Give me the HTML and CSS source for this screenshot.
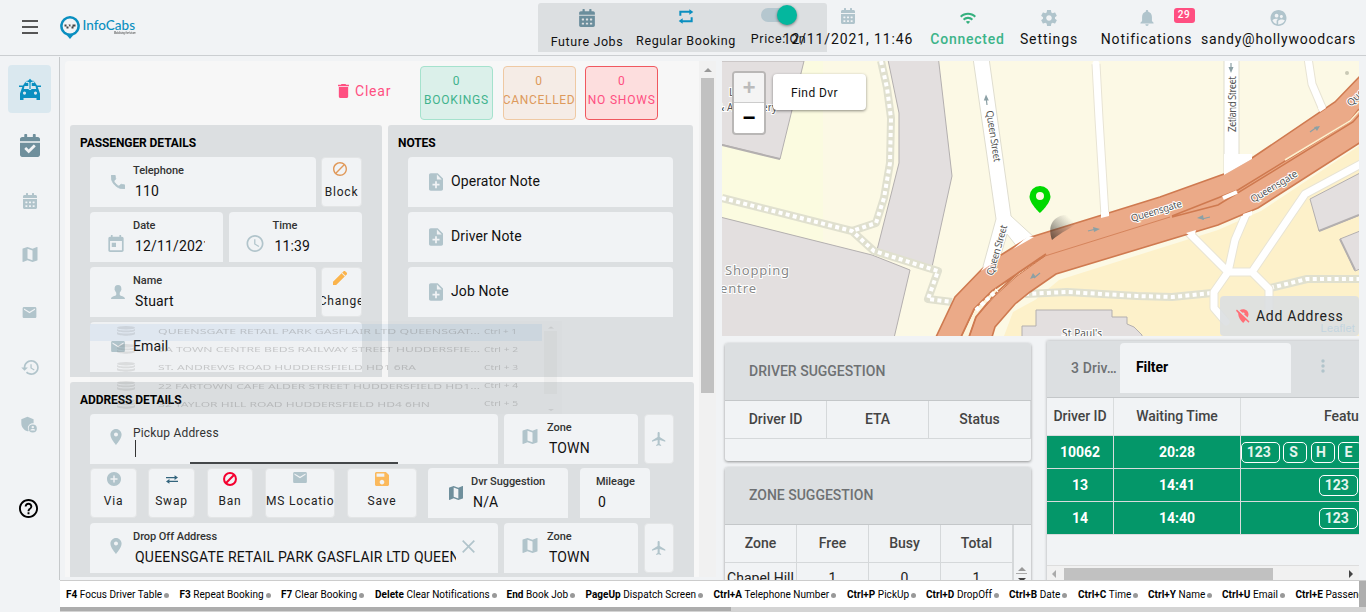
FILE: index.html
```html
<!DOCTYPE html>
<html lang="en">
<head>
<meta charset="utf-8">
<title>InfoCabs</title>
<link rel="stylesheet" href="styles.css">
</head>
<body>
<svg class="defs" width="0" height="0">
  <symbol id="cal" viewBox="0 0 448 512"><path fill-rule="evenodd" d="M0 464c0 26 22 48 48 48h352c26 0 48-22 48-48V192H0v272zM320 268h40q12 0 12 12v32q0 12-12 12h-40q-12 0-12-12v-32q0-12 12-12zM320 388h40q12 0 12 12v32q0 12-12 12h-40q-12 0-12-12v-32q0-12 12-12zM204 268h40q12 0 12 12v32q0 12-12 12h-40q-12 0-12-12v-32q0-12 12-12zM204 388h40q12 0 12 12v32q0 12-12 12h-40q-12 0-12-12v-32q0-12 12-12zM88 268h40q12 0 12 12v32q0 12-12 12H88q-12 0-12-12v-32q0-12 12-12zM88 388h40q12 0 12 12v32q0 12-12 12H88q-12 0-12-12v-32q0-12 12-12zM400 64h-48V16c0-9-7-16-16-16h-32c-9 0-16 7-16 16v48H160V16c0-9-7-16-16-16h-32c-9 0-16 7-16 16v48H48C22 64 0 86 0 112v48h448v-48c0-26-22-48-48-48z"/></symbol>
  <symbol id="calcheck" viewBox="0 0 448 512"><path fill-rule="evenodd" d="M0 464c0 26 22 48 48 48h352c26 0 48-22 48-48V192H0v272zM346 284L203 426q-8 8-17 0L103 342q-8-8 0-17l28-28q9-8 17 0l46 47 107-106q8-8 17 0l28 28q8 9 0 18zM400 64h-48V16c0-9-7-16-16-16h-32c-9 0-16 7-16 16v48H160V16c0-9-7-16-16-16h-32c-9 0-16 7-16 16v48H48C22 64 0 86 0 112v48h448v-48c0-26-22-48-48-48z"/></symbol>
  <symbol id="repeat" viewBox="0 0 24 24"><path d="M5 11H2V3.500h15V1l6 4.200-6 4.200V6.500H5zM19 13h3v7.500H7V23l-6-4.200 6-4.200v2.900h12z"/></symbol>
  <symbol id="wifi" viewBox="0 0 24 18"><path d="M0 6l2.200 2.200c5.400-5.400 14.200-5.400 19.600 0L24 6C17.400-.6 6.600-.6 0 6zm8.700 8.700L12 18l3.300-3.300c-1.800-1.800-4.800-1.800-6.600 0zM4.400 10.400l2.200 2.200c3-3 7.800-3 10.800 0l2.200-2.200c-4.200-4.200-11-4.200-15.200 0z"/></symbol>
  <symbol id="gear" viewBox="2 2 20 20"><path d="M19.430 12.980c.04-.32.07-.64.07-.98s-.03-.66-.07-.98l2.110-1.650c.19-.15.24-.42.12-.64l-2-3.460c-.12-.22-.39-.3-.61-.22l-2.490 1c-.52-.4-1.080-.73-1.690-.98l-.38-2.650C14.460 2.180 14.250 2 14 2h-4c-.25 0-.46.18-.49.42l-.38 2.650c-.61.25-1.170.59-1.690.98l-2.490-1c-.23-.09-.49 0-.61.22l-2 3.460c-.13.22-.07.49.12.64l2.110 1.650c-.04.32-.07.65-.07.98s.03.66.07.98l-2.110 1.650c-.19.15-.24.42-.12.64l2 3.460c.12.22.39.3.61.22l2.490-1c.52.4 1.080.73 1.690.98l.38 2.650c.03.24.24.42.49.42h4c.25 0 .46-.18.49-.42l.38-2.650c.61-.25 1.170-.59 1.690-.98l2.490 1c.23.09.49 0 .61-.22l2-3.460c.12-.22.07-.49-.12-.64l-2.110-1.650zM12 15.500c-1.930 0-3.500-1.570-3.500-3.500s1.570-3.500 3.500-3.500 3.500 1.570 3.500 3.500-1.570 3.500-3.500 3.500z"/></symbol>
  <symbol id="bell" viewBox="4 2.500 16 19.500"><path d="M12 22c1.100 0 2-.9 2-2h-4c0 1.100.9 2 2 2zm6-6v-5c0-3.070-1.640-5.640-4.500-6.320V4c0-.83-.67-1.500-1.500-1.500s-1.500.67-1.500 1.500v.68C7.630 5.360 6 7.920 6 11v5l-2 2v1h16v-1l-2-2z"/></symbol>
  <symbol id="users" viewBox="2 2 20 20"><path d="M12 2C6.480 2 2 6.480 2 12s4.480 10 10 10 10-4.480 10-10S17.520 2 12 2zm3.610 6.340c1.070 0 1.930.86 1.930 1.930s-.86 1.930-1.930 1.930-1.930-.86-1.930-1.930c-.01-1.070.86-1.930 1.930-1.930zm-6-1.580c1.300 0 2.360 1.060 2.360 2.360s-1.060 2.360-2.360 2.360-2.360-1.060-2.360-2.360c0-1.310 1.050-2.360 2.360-2.360zm0 9.130v3.750c-2.400-.75-4.300-2.600-5.140-4.960 1.050-1.120 3.670-1.690 5.140-1.690.53 0 1.200.08 1.900.22-1.640.87-1.900 2.020-1.900 2.680zM11.610 20v-4.110c0-1.420 2.940-2.130 4.400-2.130 1.070 0 2.920.39 3.840 1.150C18.680 17.980 15.390 20.100 11.610 20z"/></symbol>
  <symbol id="map" viewBox="3 3 18 18"><path d="M20.500 3l-.16.03L15 5.100 9 3 3.360 4.900c-.21.070-.36.25-.36.480V20.500c0 .28.220.5.5.5l.16-.03L9 18.900l6 2.100 5.640-1.900c.21-.07.36-.25.36-.48V3.500c0-.28-.22-.5-.5-.5zM15 19l-6-2.110V5l6 2.110V19z"/></symbol>
  <symbol id="mail" viewBox="2 4 20 16"><path d="M20 4H4c-1.100 0-2 .9-2 2v12c0 1.100.9 2 2 2h16c1.100 0 2-.9 2-2V6c0-1.100-.9-2-2-2zm0 4l-8 5-8-5V6l8 5 8-5v2z"/></symbol>
  <symbol id="hist" viewBox="1 3 21 18"><path d="M13 3c-4.970 0-9 4.030-9 9H1l3.890 3.890.07.14L9 12H6c0-3.870 3.130-7 7-7s7 3.130 7 7-3.130 7-7 7c-1.930 0-3.680-.79-4.940-2.060l-1.420 1.420C8.270 19.990 10.510 21 13 21c4.970 0 9-4.030 9-9s-4.030-9-9-9zm-1 5v5l4.280 2.540.72-1.210-3.500-2.080V8H12z"/></symbol>
  <symbol id="admin" viewBox="3 1 20 22"><path d="M17 11c.34 0 .67.040 1 .09V6.270L10.500 3 3 6.270v4.910c0 4.540 3.200 8.790 7.500 9.820.55-.13 1.080-.32 1.600-.55-.69-.98-1.100-2.170-1.100-3.450 0-3.310 2.690-6 6-6z"/><path fill-rule="evenodd" d="M17 12.500a5 5 0 1 0 0 10 5 5 0 0 0 0-10zm0 1.800a1.500 1.500 0 1 1 0 3 1.500 1.500 0 0 1 0-3zm-2.800 5c.3-1.500 5.300-1.500 5.600 0v.7h-5.600z"/></symbol>
  <symbol id="help" viewBox="2 2 20 20"><path d="M11 18h2v-2h-2v2zm1-16C6.480 2 2 6.480 2 12s4.480 10 10 10 10-4.480 10-10S17.520 2 12 2zm0 18c-4.410 0-8-3.590-8-8s3.590-8 8-8 8 3.590 8 8-3.590 8-8 8zm0-14c-2.210 0-4 1.790-4 4h2c0-1.100.9-2 2-2s2 .9 2 2c0 2-3 1.750-3 5h2c0-2.250 3-2.500 3-5 0-2.210-1.790-4-4-4z"/></symbol>
  <symbol id="trash" viewBox="5 3 14 18"><path d="M6 19c0 1.100.9 2 2 2h8c1.100 0 2-.9 2-2V7H6v12zM19 4h-3.500l-1-1h-5l-1 1H5v2h14V4z"/></symbol>
  <symbol id="phone" viewBox="3 3 18 18"><path stroke="currentColor" stroke-width="1" d="M6.620 10.790c1.440 2.830 3.760 5.140 6.590 6.590l2.200-2.200c.27-.27.67-.36 1.020-.24 1.120.37 2.330.57 3.570.57.55 0 1 .45 1 1V20c0 .55-.45 1-1 1-9.390 0-17-7.610-17-17 0-.55.45-1 1-1h3.500c.55 0 1 .45 1 1 0 1.250.2 2.450.57 3.570.11.35.030.74-.25 1.020l-2.200 2.200z"/></symbol>
  <symbol id="today" viewBox="3 1 18 20"><path d="M19 3h-1V1h-2v2H8V1H6v2H5c-1.110 0-2 .9-2 2v14c0 1.100.89 2 2 2h14c1.100 0 2-.9 2-2V5c0-1.100-.9-2-2-2zm0 16H5V8h14v11zM7 10h5v5H7z"/></symbol>
  <symbol id="clock" viewBox="2 2 20 20"><path d="M12 2C6.500 2 2 6.500 2 12s4.500 10 10 10 10-4.500 10-10S17.500 2 12 2zm0 18c-4.400 0-8-3.600-8-8s3.600-8 8-8 8 3.600 8 8-3.600 8-8 8zM12.500 7H11v6l5.200 3.200.8-1.200-4.500-2.700z"/></symbol>
  <symbol id="person" viewBox="0 0 16 16"><path d="M8 0C5.200 0 4 1.800 4.200 4c0 .4-.3.600-.1 1.300.2.700.5.800.6 1.200.4 1.300 1.200 1.900 1.300 2.300v2.300C5.500 12.800 0 12.600 0 16h16c0-3.400-5.500-3.200-6-4.900V8.800c.1-.4.900-1 1.300-2.300.1-.4.400-.5.600-1.200.2-.7-.1-.9-.1-1.300C12 1.800 10.800 0 8 0z"/></symbol>
  <symbol id="pencil" viewBox="3 3 18 18"><path stroke="currentColor" stroke-width=".6" d="M3 17.250V21h3.750L17.810 9.940l-3.750-3.750L3 17.250zM20.710 7.040c.39-.39.39-1.020 0-1.410l-2.340-2.340c-.39-.39-1.020-.39-1.410 0l-1.830 1.830 3.750 3.750 1.830-1.830z"/></symbol>
  <symbol id="block" viewBox="2 2 20 20"><path d="M12 2C6.480 2 2 6.480 2 12s4.480 10 10 10 10-4.480 10-10S17.520 2 12 2zM4 12c0-4.420 3.580-8 8-8 1.850 0 3.550.63 4.900 1.690L5.690 16.900C4.630 15.550 4 13.850 4 12zm8 8c-1.850 0-3.550-.63-4.900-1.690L18.310 7.100C19.370 8.450 20 10.150 20 12c0 4.420-3.580 8-8 8z"/></symbol>
  <symbol id="ban" viewBox="0 0 20 20"><circle cx="10" cy="10" r="8.500" fill="none" stroke="currentColor" stroke-width="2.900"/><path d="M4 16L16 4" stroke="currentColor" stroke-width="2.900"/></symbol>
  <symbol id="note" viewBox="4 2 16 20"><path d="M14 2H6c-1.100 0-1.990.9-1.990 2L4 20c0 1.100.89 2 1.990 2H18c1.100 0 2-.9 2-2V8l-6-6zm2 14h-3v3h-2v-3H8v-2h3v-3h2v3h3v2zm-3-7V3.500L18.500 9H13z"/></symbol>
  <symbol id="pin" viewBox="5 2 14 20"><path d="M12 2C8.130 2 5 5.130 5 9c0 5.250 7 13 7 13s7-7.750 7-13c0-3.870-3.130-7-7-7zm0 9.500c-1.380 0-2.500-1.120-2.500-2.500s1.120-2.500 2.500-2.500 2.500 1.120 2.500 2.500-1.120 2.500-2.500 2.500z"/></symbol>
  <symbol id="plus" viewBox="2 2 20 20"><path d="M12 2C6.480 2 2 6.480 2 12s4.480 10 10 10 10-4.480 10-10S17.520 2 12 2zm5 11h-4v4h-2v-4H7v-2h4V7h2v4h4v2z"/></symbol>
  <symbol id="swap" viewBox="0 0 14 10"><path d="M0 2h10V0l4 2.800-4 2.800V3.600H0zM14 6.400H4V4.500L0 7.300 4 10V8h10z"/></symbol>
  <symbol id="save" viewBox="3 3 18 18"><path d="M17 3H5c-1.110 0-2 .9-2 2v14c0 1.100.89 2 2 2h14c1.100 0 2-.9 2-2V7l-4-4zm-5 16c-1.660 0-3-1.340-3-3s1.340-3 3-3 3 1.340 3 3-1.340 3-3 3zm3-10H5V5h10v4z"/></symbol>
  <symbol id="plane" viewBox="2 2 20 20"><path d="M21 16v-2l-8-5V3.500c0-.83-.67-1.500-1.500-1.500S10 2.670 10 3.500V9l-8 5v2l8-2.500V19l-2 1.500V22l3.500-1 3.500 1v-1.500L13 19v-5.500l8 2.500z"/></symbol>
  <symbol id="db" viewBox="0 0 18 10"><ellipse cx="9" cy="1.800" rx="9" ry="1.700"/><path d="M0 3c2 2 16 2 18 0v1.700c-2 2-16 2-18 0zM0 6c2 2 16 2 18 0v2c-2 2.300-16 2.300-18 0z"/></symbol>
</svg>

<header class="topbar">
  <svg class="burger" viewBox="0 0 16 14"><path d="M0 1h16M0 7h16M0 13h16"/></svg>
  <div class="logo">
    <svg viewBox="0 0 20 23"><path fill="#0a8fc0" d="M10 0a10 10 0 0 0-3 19.500L10 23l3-3.500A10 10 0 0 0 10 0z"/><circle cx="10" cy="10" r="7.400" fill="#f1f3f5"/><path d="M4.500 8.500h2v2h2v2h-2v-2h-2zM8.500 8.500h2v2h2v-2h3v2h-2v2h-2v-2h-2zM6.500 10.500h2" fill="#444"/></svg>
    <div class="brand"><span class="brand-name">InfoCabs</span><span class="brand-tag">Mobilising the future</span></div>
  </div>
  <div class="jobs">
    <div class="hi hi-future"><svg class="slate"><use href="#cal"/></svg><span>Future Jobs</span></div>
    <div class="hi hi-regular"><svg><use href="#repeat"/></svg><span>Regular Booking</span></div>
    <div class="hi hi-price"><i class="switch"><b></b></i><span>Price: On</span></div>
  </div>
  <div class="hi hi-date"><svg><use href="#cal"/></svg><span>12/11/2021, 11:46</span></div>
  <div class="hi hi-conn"><svg><use href="#wifi"/></svg><span>Connected</span></div>
  <div class="hi hi-set"><svg><use href="#gear"/></svg><span>Settings</span></div>
  <div class="hi hi-notif"><svg><use href="#bell"/></svg><span>Notifications</span><em>29</em></div>
  <div class="hi hi-user"><svg><use href="#users"/></svg><span>sandy@hollywoodcars</span></div>
</header>

<div class="body">
  <nav class="side">
    <a class="active"><svg viewBox="0 0 22 22" width="22" height="22"><path fill="#0a8fc0" fill-rule="evenodd" d="M1 22v-6.500L3.300 9H0V7.500h4L6 4.500Q8 2 9.500 2v6h-4L4.800 11h12.400L16.500 8h-4V2q2 0 3.500 2.500l2 3h4V9h-3.300L21 15.500V22h-3.500v-2h-13v2zM5.500 13.500a1.600 1.600 0 1 0 0 3.200 1.600 1.600 0 0 0 0-3.200zm11 0a1.600 1.600 0 1 0 0 3.200 1.600 1.600 0 0 0 0-3.200z"/><path fill="#0a8fc0" stroke="#e8f6fb" stroke-width=".8" d="M11 .2l4 4.300h-3v7h-2v-7H7z"/></svg></a>
    <a class="s2"><svg width="20" height="23"><use href="#calcheck"/></svg></a>
    <a class="s3"><svg width="14" height="16"><use href="#cal"/></svg></a>
    <a class="s4"><svg width="16" height="15"><use href="#map"/></svg></a>
    <a class="s5"><svg width="15" height="11"><use href="#mail"/></svg></a>
    <a class="s6"><svg width="18" height="15"><use href="#hist"/></svg></a>
    <a class="s7"><svg width="17" height="18"><use href="#admin"/></svg></a>
    <a class="s8"><svg width="19" height="19"><use href="#help"/></svg></a>
  </nav>

  <main class="form">
    <div class="tools">
      <div class="clear"><svg width="11" height="14"><use href="#trash"/></svg>Clear</div>
      <div class="stat green"><span>0</span><span>BOOKINGS</span></div>
      <div class="stat orange"><span>0</span><span>CANCELLED</span></div>
      <div class="stat red"><span>0</span><span>NO SHOWS</span></div>
    </div>
    <div class="panels">
      <section class="panel passenger">
        <h2>PASSENGER DETAILS</h2>
        <div class="row">
          <div class="field grow"><svg width="14" height="14"><use href="#phone"/></svg><div><label>Telephone</label><p>110</p></div></div>
          <div class="btn b40 orange-ic"><svg width="14" height="14"><use href="#block"/></svg><span>Block</span></div>
        </div>
        <div class="row">
          <div class="field grow date"><svg width="16" height="17"><use href="#today"/></svg><div><label>Date</label><p class="clip">12/11/2021</p></div></div>
          <div class="field grow time"><svg width="18" height="17"><use href="#clock"/></svg><div><label>Time</label><p>11:39</p></div></div>
        </div>
        <div class="row">
          <div class="field grow"><svg width="14" height="14"><use href="#person"/></svg><div><label>Name</label><p>Stuart</p></div></div>
          <div class="btn b40 amber-ic"><svg width="14" height="14"><use href="#pencil"/></svg><span>Change</span></div>
        </div>
        <div class="row"><div class="field grow solo mailf"><svg width="14" height="11"><use href="#mail"/></svg><div><p>Email</p></div></div></div>
      </section>
      <section class="panel notes">
        <h2>NOTES</h2>
        <div class="row"><div class="field grow solo"><svg width="14" height="18"><use href="#note"/></svg><div><p>Operator Note</p></div></div></div>
        <div class="row"><div class="field grow solo"><svg width="14" height="18"><use href="#note"/></svg><div><p>Driver Note</p></div></div></div>
        <div class="row"><div class="field grow solo"><svg width="14" height="18"><use href="#note"/></svg><div><p>Job Note</p></div></div></div>
      </section>
    </div>
    <section class="panel address">
      <h2>ADDRESS DETAILS</h2>
      <div class="row">
        <div class="field addr pick"><svg width="12" height="16"><use href="#pin"/></svg><div><label>Pickup Address</label><i class="caret"></i></div><i class="progress"></i></div>
        <div class="field zone"><svg width="16" height="15"><use href="#map"/></svg><div><label>Zone</label><p>TOWN</p></div></div>
        <div class="btn plane"><svg width="14" height="14"><use href="#plane"/></svg></div>
      </div>
      <div class="row mid">
        <div class="btn via"><svg width="14" height="14"><use href="#plus"/></svg><span>Via</span></div>
        <div class="btn swp"><svg width="12" height="9"><use href="#swap"/></svg><span>Swap</span></div>
        <div class="btn bn"><svg width="14" height="14"><use href="#ban"/></svg><span>Ban</span></div>
        <div class="btn sms"><svg width="14" height="11"><use href="#mail"/></svg><span>SMS Location</span></div>
        <div class="btn sv"><svg width="14" height="14"><use href="#save"/></svg><span>Save</span></div>
        <div class="field sugg"><svg width="14" height="14"><use href="#map"/></svg><div><label>Dvr Suggestion</label><p>N/A</p></div></div>
        <div class="field miles"><div><label>Mileage</label><p>0</p></div></div>
      </div>
      <div class="row">
        <div class="field addr"><svg width="12" height="16"><use href="#pin"/></svg><div><label>Drop Off Address</label><p class="clip">QUEENSGATE RETAIL PARK GASFLAIR LTD QUEENSGATE</p></div><svg class="x" width="13" height="13" viewBox="0 0 13 13"><path d="M.7.700l11.600 11.600M12.300.700L.7 12.300"/></svg></div>
        <div class="field zone"><svg width="16" height="15"><use href="#map"/></svg><div><label>Zone</label><p>TOWN</p></div></div>
        <div class="btn plane"><svg width="14" height="14"><use href="#plane"/></svg></div>
      </div>
    </section>
    <svg class="ghost" width="472" height="93" viewBox="90 321 472 93">
      <rect x="90" y="321" width="472" height="93" fill="#888" opacity=".02"/>
      <rect x="90" y="324" width="452" height="17" fill="#6aa5dc" opacity=".12"/>
      <rect x="544" y="331" width="13" height="63" fill="#888" opacity=".06"/>
      <g fill="#666" opacity=".15"><use href="#db" x="117" y="326" width="18" height="10"/><use href="#db" x="117" y="344" width="18" height="10"/><use href="#db" x="117" y="362" width="18" height="10"/><use href="#db" x="117" y="381" width="18" height="10"/><use href="#db" x="117" y="399" width="18" height="10"/><path d="M548 328.500l3-2 3 2zM548 409l3 2 3-2z"/></g>
      <g class="ghost-text">
        <text x="158" y="334" textLength="322" lengthAdjust="spacingAndGlyphs">QUEENSGATE RETAIL PARK GASFLAIR LTD QUEENSGAT...</text>
        <text x="158" y="352" textLength="322" lengthAdjust="spacingAndGlyphs">5A TOWN CENTRE BEDS RAILWAY STREET HUDDERSFIE...</text>
        <text x="158" y="370" textLength="258" lengthAdjust="spacingAndGlyphs">ST. ANDREWS ROAD HUDDERSFIELD HD1 6RA</text>
        <text x="158" y="389" textLength="322" lengthAdjust="spacingAndGlyphs">22 FARTOWN CAFE ALDER STREET HUDDERSFIELD HD1...</text>
        <text x="158" y="407" textLength="272" lengthAdjust="spacingAndGlyphs">32 TAYLOR HILL ROAD HUDDERSFIELD HD4 6HN</text>
        <text x="484" y="334" textLength="33" lengthAdjust="spacingAndGlyphs">Ctrl + 1</text><text x="484" y="352" textLength="34" lengthAdjust="spacingAndGlyphs">Ctrl + 2</text><text x="484" y="370" textLength="34" lengthAdjust="spacingAndGlyphs">Ctrl + 3</text><text x="484" y="388" textLength="34" lengthAdjust="spacingAndGlyphs">Ctrl + 4</text><text x="484" y="406" textLength="34" lengthAdjust="spacingAndGlyphs">Ctrl + 5</text>
      </g>
    </svg>
  </main>
  <div class="vscroll"><i></i><b></b></div>

  <aside class="right">
    <div class="mapbox">
      <svg class="mapart" width="637" height="275" viewBox="722 61 637 275">
        <rect x="722" y="61" width="637" height="275" fill="#fcf9e5"/>
        <path fill="#fbfbe0" d="M722 61h101v200H722z"/>
        <path fill="#fdf1ca" d="M1004 336l9-24 22-12 24-20 159-50 43-19 98-65v190z"/>
        <g fill="#e3dfdf" stroke="#b3afaf" stroke-width="1">
          <path d="M720 61h84l-24 98-60-15zM887 55l12 58v50l-22 87 55 17 20-91-14-121zM720 217l152 38 38 15-16 68H720zM1310 199l50-26v42l-41 16zM1340 239l20-8v38l-5 2zM1036 310h76v7h15v7l7 3 8 8v5H1022v-14h14z"/>
          <path fill="none" stroke-width="2" d="M722 145l58 14M1319 231l40-16M1340 239l15 31"/>
        </g>
        <g fill="none" stroke-linejoin="round">
          <path stroke="#e0e0cf" stroke-width="8" d="M881 61l6 27 4 30-1 45-6 35-8 25-24 8M722 198l130 33 22 20 64 20-10 28 24 3M1025 294l42-2 70 4 35 1 40-4M1270 288l37-9h54"/>
          <path stroke="#fff" stroke-width="4" stroke-dasharray="4 3.300" d="M881 61l6 27 4 30-1 45-6 35-8 25-24 8M722 198l130 33 22 20 64 20-10 28 24 3M1025 294l42-2 70 4 35 1 40-4M1270 288l37-9h54"/>
          <path stroke="#e8e4d4" stroke-width="9" d="M1096 64l3 55 6 97M1308 58l4 26 11 26M1188 232l40 40h24l53-78 56-30M1247 212l-12 28-7 32-14 20v16l12 14M1252 272l17 17v20"/>
          <path stroke="#fff" stroke-width="7" stroke-linecap="round" d="M1096 64l3 55 6 97M1308 58l4 26 11 26M1188 232l40 40h24l53-78 56-30M1247 212l-12 28-7 32-14 20v16l12 14M1252 272l17 17v20"/>
        </g>
        <path fill="#fff" stroke="#dfddcf" d="M973 58h16l22 158 24 22-17 10-11-14-7 24-18 12 14-51zM1224 58h15v97l4 3h12l-31 19z"/>
        <path fill="#ebaa88" stroke="#cf7a50" stroke-width="1.600" d="M936 337l19-40 27-28 19-14 27-17 132-41 64-23 28-16 83-56 26-27v67l-103 66-40 17-162 49-26 18-15 12-20 23-3 10z"/>
        <path fill="#fff" d="M981 271l6-9 14-7-2 4zM1013 249l15-13 6 1zM1101 218l8-2 0-4h-8zM1224 175l28-16v-5h-28zM1320 112l6-4-2-4-6 4zM1186 233l10-3-1 4-5 2zM1243 214l9-3v4l-8 4z"/>
        <g fill="none" stroke="#cf7a50">
          <path fill="#fcf4db" d="M961 337l14-29 17-17 25-17 28-18-28 20-22 20-19 21-7 20"/>
          <path d="M1040 258l-48 33-18 18-13 28M1046 254l-28 19-24 22-18 22-7 20" stroke-width="1.800"/>
          <path d="M1045 256l125-39" stroke-width=".8"/>
          <path d="M1172 216l66-26 112-69 9-12M1172 217l46-12 135-83 7-8" stroke-width="1.500"/>
          <path stroke="#fdf1d0" stroke-width="1.500" d="M1285 160l65-39 9-10"/>
          <path stroke="#fff" stroke-width="4" d="M1223 198l14-6"/>
          <path stroke="#fff" stroke-width="4" stroke-dasharray="4 3" d="M976 310l21-20"/>
        </g>
        <g class="arrows"><path d="M987 105l-1-8M1231 63v6M1088 231l8-2M1210 217l-8 2M1310 132l7-5M1040 273l-6 5"/><path fill="#8ba0a5" stroke="none" d="M986 94.500l2.800 6h-5zM1231 73l-2.500-6h5zM1100 229l-6 3-1-5zM1197 218l6-3 1 5zM1320 126l-3 5-3-4zM1030 279l3-6 3 4z"/></g>
        <g class="maptext">
          <text x="729" y="96">Library</text><text x="717" y="111" textLength="60">&amp; Art Gallery</text>
          <text class="big" x="725" y="275" textLength="64">Shopping</text><text class="big" x="720" y="293" textLength="36">entre</text>
          <text transform="translate(986 111) rotate(81)" textLength="52">Queen Street</text>
          <text transform="translate(993 276) rotate(-74)" textLength="52">Queen Street</text>
          <text transform="translate(1236 132) rotate(-90)" textLength="56">Zetland Street</text>
          <text transform="translate(1132 222) rotate(-17)" textLength="53">Queensgate</text>
          <text transform="translate(1253 203) rotate(-31)" textLength="53">Queensgate</text>
          <text transform="translate(1351 107) rotate(-46)">Queensgate</text>
          <text x="1062" y="337" textLength="40">St Paul's</text>
        </g>
        <circle cx="1347" cy="73" r="2" fill="#c9c9b5"/>
        <defs><linearGradient id="sh" x1="0" x2="1" y1="1" y2="0"><stop offset="0" stop-color="#332a22" stop-opacity=".75"/><stop offset=".8" stop-color="#555" stop-opacity="0"/></linearGradient></defs>
        <path class="soft" fill="url(#sh)" d="M1052 240c-4-12-1-20 8-24 9-3 20 0 17 6-4 6-16 10-25 18z"/>
        <path fill="#00d900" fill-rule="evenodd" d="M1040 186a10.500 10.500 0 0 0-10.500 10.500c0 7 10.500 16.500 10.500 16.500s10.500-9.500 10.500-16.500A10.500 10.500 0 0 0 1040 186zm0 6a4 4 0 1 1 0 8 4 4 0 0 1 0-8z"/>
      </svg>
      <div class="zoomctl"><span class="in">+</span><span class="out">−</span></div>
      <div class="find">Find Dvr</div>
      <div class="addbtn"><svg width="14" height="14" viewBox="0 0 14 14"><path fill="#ff6f77" d="M3.600 1.200C6-.3 9-.2 11 1.700c1.900 2 1.900 4.400.6 6.700L3.600 1.200zM.9.500l12.600 12-1 1.200-2.800-2.600L7.200 14C4.500 11 2 8 2.200 4.200L0 1.700z"/><circle cx="7.300" cy="4.600" r="1.200" fill="#dfe1e1"/></svg>Add Address</div>
      <div class="leaflet">Leaflet</div>
    </div>
    <div class="cards">
      <div class="leftcol">
        <section class="card dsug">
          <h3>DRIVER SUGGESTION</h3>
          <div class="tr th"><span>Driver ID</span><span>ETA</span><span>Status</span></div>
        </section>
        <section class="card zsug">
          <h3>ZONE SUGGESTION</h3>
          <div class="ztable">
            <div class="zcols">
              <div class="tr th"><span>Zone</span><span>Free</span><span>Busy</span><span>Total</span></div>
              <div class="tr td"><span>Chapel Hill</span><span>1</span><span>0</span><span>1</span></div>
            </div>
            <div class="zscroll"><i></i><b></b></div>
          </div>
        </section>
      </div>
      <section class="card drivers">
        <div class="dhead"><span class="count">3 Driv…</span><span class="filter">Filter</span><svg width="4" height="14" viewBox="0 0 4 14"><circle cx="2" cy="2" r="1.700"/><circle cx="2" cy="7" r="1.700"/><circle cx="2" cy="12" r="1.700"/></svg></div>
        <div class="dr dth"><span>Driver ID</span><span>Waiting Time</span><span class="feat">Features</span></div>
        <div class="dr g"><span>10062</span><span>20:28</span><span class="tags"><i class="w">123</i><i>S</i><i>H</i><i>E</i></span></div>
        <div class="dr g"><span>13</span><span>14:41</span><span class="tags end"><i class="w">123</i></span></div>
        <div class="dr g"><span>14</span><span>14:40</span><span class="tags end"><i class="w">123</i></span></div>
        <div class="hscroll"><i></i><b></b><u></u></div>
      </section>
    </div>
  </aside>
</div>

<footer class="foot">
  <div class="keys">
    <span><b>F4</b> Focus Driver Table<i></i></span><span><b>F3</b> Repeat Booking<i></i></span><span><b>F7</b> Clear Booking<i></i></span><span><b>Delete</b> Clear Notifications<i></i></span><span><b>End</b> Book Job<i></i></span><span><b>PageUp</b> Dispatch Screen<i></i></span><span><b>Ctrl+A</b> Telephone Number<i></i></span><span><b>Ctrl+P</b> PickUp<i></i></span><span><b>Ctrl+D</b> DropOff<i></i></span><span><b>Ctrl+B</b> Date<i></i></span><span><b>Ctrl+C</b> Time<i></i></span><span><b>Ctrl+Y</b> Name<i></i></span><span><b>Ctrl+U</b> Email<i></i></span><span><b>Ctrl+E</b> Passengers</span>
  </div>
  <div class="fedge"></div>
  <div class="fbar"><i></i></div>
</footer>
</body>
</html>
```
FILE: styles.css
```css
* { box-sizing: border-box; }
body { margin: 0; width: 1366px; height: 612px; overflow: hidden; background: #f1f3f5; font-family: Roboto, "Liberation Sans", sans-serif; color: #111; display: flex; flex-direction: column; }
svg { flex: none; display: block; fill: currentColor; }
.defs { position: absolute; }
h2, h3, p { margin: 0; }
i, em { font-style: normal; }

.topbar { height: 56px; flex: none; border-bottom: 1px solid #cbced1; display: flex; align-items: flex-start; padding-left: 22px; }
.burger { width: 16px; height: 14px; margin-top: 20px; fill: none; stroke: #555; stroke-width: 2; }
.logo { display: flex; margin: 16px 0 0 22px; width: 478px; }
.logo > svg { width: 20px; height: 23px; }
.brand { display: flex; flex-direction: column; width: 53px; margin-left: 2.500px; align-items: flex-end; }
.brand-name { font: 500 13.500px/17px Lato, sans-serif; color: #0a8fc0; letter-spacing: 0; padding-top: 1px; width: 53px; }
.brand-tag { font-size: 3px; line-height: 3px; color: #333; white-space: nowrap; margin-top: -2px; transform: scale(.78,1); transform-origin: right; }
.jobs { width: 289px; height: 49px; margin-top: 3px; background: #dcdfe1; border-radius: 3px 3px 0 0; display: flex; flex: none; }
.hi { display: flex; flex-direction: column; align-items: center; flex: none; position: relative; color: #b0c4cc; }
.hi span { color: #111; font-size: 14px; line-height: 16px; letter-spacing: .88px; white-space: nowrap; }
.hi svg { color: #b0c4cc; }
.jobs .hi span { font-size: 12.500px; letter-spacing: .6px; }
.hi-future { width: 98px; padding-top: 6px; }
.hi-future svg { width: 16px; height: 18px; }
.hi-future span { margin-top: 7px; }
.hi .slate { color: #6b8e9c; }
.hi-regular { width: 100px; padding-top: 5px; }
.hi-regular svg { width: 16px; height: 17px; color: #0a8fc0; }
.hi-regular span { margin-top: 8px; }
.hi-price { width: 85px; }
.hi-price span { margin-top: 28px; }
.switch { position: absolute; left: 25px; top: 5px; width: 33px; height: 14px; border-radius: 7px; background: #b5c7cf; }
.switch b { position: absolute; right: -3px; top: -3px; width: 20px; height: 20px; border-radius: 50%; background: #04b79e; box-shadow: 0 1px 3px rgba(0,0,0,.45); }
.hi-date { width: 42px; padding-top: 8px; }
.hi-date svg { width: 14px; height: 16px; }
.hi-date span, .hi-conn span, .hi-set span, .hi-notif span, .hi-user span { margin-top: 7px; }
.hi-conn { width: 195px; padding-top: 12px; margin-left: 1px; }
.hi-conn svg { width: 18px; height: 12px; color: #35b07e; }
.hi-conn span { color: #3cb489; font-weight: 500; letter-spacing: .75px; }
.hi-set { width: 0; margin-left: -16px; padding-top: 10px; }
.hi-set svg { width: 16px; height: 16px; }
.hi-set span { margin-top: 5px; }
.hi-notif { width: 0; margin-left: 97.500px; padding-top: 10px; }
.hi-notif svg { width: 14px; height: 16px; margin-left: 1px; }
.hi-notif span { margin-top: 5px; }
.hi-notif em { position: absolute; left: 27px; top: 8px; width: 21px; height: 15px; border-radius: 3px; background: #ff4f81; color: #fff; font-weight: 500; font-size: 10px; line-height: 14px; text-align: center; letter-spacing: .5px; }
.hi-user { width: 0; margin-left: 132px; padding-top: 10px; }
.hi-user svg { width: 17px; height: 16px; }
.hi-user span { margin-top: 5px; letter-spacing: .78px; }

.body { height: 524px; display: flex; flex: none; overflow: hidden; }
.side { width: 60px; margin-top: 1px; padding-top: 8px; border-right: 1px solid #c6c9cb; display: flex; flex-direction: column; align-items: center; color: #b1c4cb; flex: none; }
.side .active { width: 43px; height: 48px; border-radius: 4px; background: #dae8ef; display: flex; align-items: center; justify-content: center; }
.s2 { margin-top: 21px; color: #6f8f9c; }
.s3 { margin-top: 36px; }
.s4 { margin-top: 38px; }
.s5 { margin-top: 45px; }
.s6 { margin-top: 42px; }
.s7 { margin-top: 40px; }
.s8 { margin-top: 66px; color: #000; margin-right: 3px; }

.form { width: 634px; margin: 5px 0 0 5px; padding: 5px 0 0 5px; height: 516px; background: #f7f7f7; border-radius: 4px 0 0 0; flex: none; position: relative; }
.tools { height: 59px; display: flex; gap: 9.600px; padding-left: 268px; }
.clear { width: 72.400px; display: flex; align-items: center; gap: 6px; height: 50px; color: #ff4f81; font-size: 14px; letter-spacing: .8px; }
.stat { width: 73px; height: 54px; border: 1px solid; border-radius: 4px; display: flex; flex-direction: column; align-items: center; font-size: 12px; line-height: 19px; padding-top: 5px; overflow: hidden; white-space: nowrap; letter-spacing: .8px; flex: none; }
.green { background: #dbf0ea; border-color: #a5e2cd; color: #41b38d; }
.orange { background: #f5ece6; border-color: #efc9a3; color: #dd9a5c; letter-spacing: .7px; }
.orange span { margin: 0 -3px; }
.red { background: #fddede; border-color: #f0585f; color: #ff4f81; }
.panels { display: flex; gap: 6px; }
.panel { background: #dcdfe1; border-radius: 3px 3px 0 0; padding: 10px 20px 5px; }
.panel h2 { font-size: 12px; font-weight: 700; line-height: 16px; margin: 0 0 6px -10px; color: #000; letter-spacing: -.08px; }
.row { display: flex; gap: 6px; height: 50px; margin-bottom: 5px; }
.passenger { width: 312px; height: 252px; }
.notes { width: 305px; }
.address { width: 624px; margin-top: 5px; height: 195px; }
.field { background: #f1f3f5; border-radius: 4px 4px 0 0; height: 50px; position: relative; display: flex; padding-left: 43px; overflow: hidden; }
.grow { flex: 1; min-width: 0; }
.field > svg { color: #b1c4cb; margin: 18px 0 0 -22px; }
.field > svg + div { margin-left: 8px; }
.field label { display: block; font-size: 11px; line-height: 13px; margin-top: 7px; color: #333; white-space: nowrap; font-weight: 500; letter-spacing: -.05px; }
.field p { font-size: 14px; line-height: 18px; margin: 5px 0 0 2px; white-space: nowrap; letter-spacing: .15px; }
.solo p { margin: 15px 0 0; letter-spacing: .1px; }
.solo > svg { margin-top: 16px; }
.mailf > svg { margin-top: 19px; }
.clip { overflow: hidden; width: 70px; }
.date > svg { margin-top: 23px; margin-left: -25px; }
.date > svg + div { margin-left: 9px; }
.time { padding-left: 44px; }
.time > svg { margin-top: 23px; margin-left: -27px; }
.time > svg + div { margin-left: 9px; }
.btn { background: #f1f3f5; border: 1px solid #e3e5e6; border-radius: 4px; height: 50px; display: flex; flex-direction: column; align-items: center; overflow: hidden; padding-top: 4px; flex: none; color: #b1c4cb; position: relative; }
.btn span { position: absolute; left: -20px; right: -20px; text-align: center; top: 24px; font-size: 12px; line-height: 16px; letter-spacing: .8px; color: #222; white-space: nowrap; }
.b40 { width: 41px; margin: 0 0 0 -1px; }
.b40 svg { margin-right: 3px; }
.b40 span { top: 26px; }
.orange-ic { color: #e0995a; }
.amber-ic { color: #fbb44c; padding-top: 3px; }
.amber-ic span { top: 25px; }
.addr { width: 408px; }
.addr > svg { margin-top: 15px; margin-left: -23px; }
.addr > svg + div { margin-left: 11px; }
.pick label { font-size: 12px; margin-top: 13px; font-weight: 400; letter-spacing: .18px; }
.pick { overflow: visible; }
.caret { display: block; width: 1px; height: 17px; background: #333; margin: 0 0 0 2px; }
.progress { position: absolute; left: 100px; width: 208px; bottom: 0; height: 2px; background: #444749; }
.addr .clip { width: 321px; letter-spacing: .22px; }
.addr .x { fill: none; stroke: #b1c4cb; stroke-width: 1.700; margin: 17px 0 0 6px; }
.zone { width: 134px; }
.zone > svg { margin-top: 15px; margin-left: -25px; }
.zone > svg + div { margin-left: 9px; }
.btn.plane { width: 30px; padding-top: 17px; }
.address .row:nth-of-type(1) { margin-top: 0; margin-bottom: 4px; }
.mid { gap: 0; }
.mid .btn { margin-right: 12px; }
.btn.via { width: 47px; margin-right: 11px; }
.btn.swp { width: 47px; color: #33647d; padding-top: 6px; }
.btn.bn { width: 46px; color: #f4002f; }
.btn.sms { width: 70px; }
.btn.sv { width: 70px; margin-right: 11px; color: #fbb95c; }
.btn.via svg, .btn.bn svg, .btn.sv svg, .btn.sms svg { margin-top: -1px; }
.sugg { width: 140px; margin-right: 12px; }
.sugg > svg { color: #6f8f9c; }
.miles { width: 70px; padding-left: 16px; }
.ghost { position: absolute; left: 25px; top: 260px; pointer-events: none; }
.ghost-text text { font: 6.500px "Noto Sans", sans-serif; fill: #777; opacity: .34; }
.vscroll { width: 17px; height: 516px; margin-top: 5px; background: #f1f1f1; flex: none; display: flex; flex-direction: column; align-items: center; }
.vscroll i, .zscroll i { border: 4px solid transparent; border-top: 0; border-bottom: 4px solid #999; margin-top: 7px; }
.vscroll b { width: 13px; height: 315px; background: #c1c1c1; margin-top: 6px; }

.right { margin: 5px 0 0 6px; width: 637px; overflow: hidden; flex: none; display: flex; flex-direction: column; }
.mapbox { position: relative; height: 275px; flex: none; overflow: hidden; }
.maptext text { font: 10px "Noto Sans", sans-serif; fill: #555; stroke: #fff; stroke-width: 2px; paint-order: stroke; }
.maptext .big { font-size: 13px; fill: #888; }
.arrows { stroke: #8ba0a5; stroke-width: 1.200; }
.soft { filter: blur(.6px); }
.zoomctl { position: absolute; left: 10px; top: 10px; width: 34px; height: 64px; border: 2px solid #b9b7b6; border-radius: 4px; background: #fff; overflow: hidden; }
.zoomctl span { display: block; height: 30px; text-align: center; font: 700 22px/34px "Liberation Mono", monospace; color: #000; }
.zoomctl .in { background: #f4f4f4; color: #bbb; border-bottom: 1px solid #ccc; }
.find { position: absolute; left: 51px; top: 13px; width: 93px; height: 36px; border-radius: 4px; background: #fff; box-shadow: 0 1px 3px rgba(0,0,0,.45); font-size: 12px; line-height: 39px; padding-left: 18px; letter-spacing: .4px; }
.leaflet { position: absolute; right: 4px; bottom: 1px; font: 11px/14px "Liberation Sans", sans-serif; color: #c3d5df; letter-spacing: .2px; }
.addbtn { position: absolute; right: 0; bottom: 0; width: 139px; height: 40px; background: rgba(220,223,225,.9); border-radius: 4px; display: flex; align-items: center; padding-left: 16px; gap: 6px; font-size: 14px; letter-spacing: .7px; color: #222; white-space: nowrap; }
.cards { display: flex; padding: 5px 0 0 3px; gap: 16px; height: 244px; }
.leftcol { width: 306px; display: flex; flex-direction: column; flex: none; padding-top: 2px; gap: 6px; }
.card { background: #f1f3f5; border-radius: 3px; box-shadow: 0 1px 3px rgba(0,0,0,.4); flex: none; }
.card h3 { background: #dcdfe1; height: 58px; border-bottom: 1px solid #c4c7c9; padding-left: 24px; font-size: 14px; line-height: 57px; font-weight: 500; color: #6e7173; border-radius: 3px 3px 0 0; letter-spacing: 0; }
.dsug { height: 118px; }
.zsug { height: 150px; }
.tr { display: flex; }
.tr span { flex: 1; border-right: 1px solid #d5d8da; border-bottom: 1px solid #d5d8da; height: 38px; line-height: 37px; text-align: center; font-size: 14px; font-weight: 500; color: #444; white-space: nowrap; }
.tr.td span { color: #222; font-weight: 400; line-height: 30px; }
.ztable { display: flex; }
.zcols { width: 289px; flex: none; border-right: 1px solid #d5d8da; }
.zscroll { padding: 42px 0 0 4px; }
.zscroll i { display: block; margin-top: 0; width: 0; }
.zscroll b { display: block; width: 11px; border-top: 1px solid #aaa; margin: 2px 0 0 -2px; }
.zscroll b::after { content: ""; display: block; width: 0; margin: 4px 0 0 2px; border: 4px solid transparent; border-top-color: #444; border-bottom: 0; }
.drivers { width: 480px; height: 250px; border-radius: 0; box-shadow: 0 0 3px rgba(0,0,0,.3); }
.dhead { height: 57px; background: #dcdfe1; border-bottom: 1px solid #c4c7c9; display: flex; align-items: flex-start; padding: 2px 0 0 24px; color: #b1c4cb; }
.count { font-size: 14px; line-height: 51px; width: 49px; color: #6e7173; font-weight: 500; letter-spacing: .1px; white-space: nowrap; }
.filter { width: 171px; height: 50px; background: #f1f3f5; border-radius: 4px 4px 0 0; padding-left: 16px; line-height: 49px; font-size: 14px; font-weight: 700; color: #000; letter-spacing: -.1px; }
.dhead svg { margin: 16px 0 0 30px; }
.dr { display: flex; height: 33px; border-bottom: 1px solid #d9dcdd; }
.dr > span { width: 67px; border-right: 1px solid #d9dcdd; text-align: center; line-height: 32px; font-size: 14px; font-weight: 500; color: #444; white-space: nowrap; flex: none; }
.dr > span:nth-child(2) { width: 127px; }
.dr > span:nth-child(3) { width: 286px; border: 0; }
.dth { height: 38px; }
.dth > span { line-height: 37px; letter-spacing: -.05px; }
.dr .feat { text-align: left; padding-left: 83px; }
.g { background: #049769; }
.g > span { color: #fff; font-weight: 700; }
.tags { display: flex; align-items: center; gap: 3.500px; }
.tags i { width: 24px; height: 21px; border: 1px solid #fff; border-radius: 5px; line-height: 19px; padding-right: 3px; color: #e5f5ee; flex: none; }
.tags .w { width: 38.500px; padding-right: 0; }
.tags i.w { padding-right: 3px; }
.end { padding-left: 78px; }
.hscroll { height: 17px; margin-top: 30px; border-top: 1px solid #ddd; background: #f1f1f1; display: flex; align-items: center; }
.hscroll i { margin-left: 5px; border: 4px solid transparent; border-left: 0; border-right-color: #aaa; }
.hscroll b { margin-left: 8px; width: 209px; height: 13px; background: #c1c1c1; }
.hscroll u { margin-left: 76px; border: 4px solid transparent; border-right: 0; border-left-color: #444; }

.foot { height: 32px; flex: none; border-top: 1px solid #ccc; margin-left: 60px; background: #fff; position: relative; }
.keys { height: 26px; width: 1299px; overflow: hidden; padding-left: 6px; display: grid; grid-template-columns: 113.500px 101.500px 94px 131.500px 79px 128px 133.500px 79px 83px 69px 70px 74px 73.500px 110px; font-size: 10px; line-height: 28px; color: #000; white-space: nowrap; letter-spacing: .03px; }
.keys i { display: inline-block; width: 5px; height: 5px; border-radius: 50%; background: #999; margin: 0 0 0 2px; }
.fedge { position: absolute; right: 0; top: 0; width: 7px; height: 26px; background: #aeaeae; }
.fbar { height: 5px; background: #d4d4d4; }
.fbar i { display: block; width: 671px; height: 4px; background: #adadad; }
```
